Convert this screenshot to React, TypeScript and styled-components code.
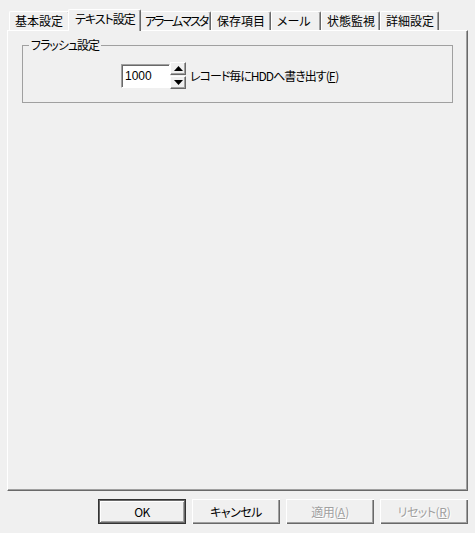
import styled, { createGlobalStyle } from 'styled-components';

const GlobalStyle = createGlobalStyle`
  html, body {
    margin: 0;
    padding: 0;
    background: #f0f0f0;
  }

  body {
    font-family: 'Noto Sans CJK JP', 'Liberation Sans', sans-serif;
    font-size: 12px;
    font-feature-settings: 'palt';
    color: #000;
  }
`;

const Window = styled.div`
  width: 475px;
  height: 533px;
  display: flex;
  flex-direction: column;
  background: #f0f0f0;
  overflow: hidden;
`;

const TabStrip = styled.div`
  display: flex;
  align-items: flex-end;
  height: 30px;
  padding-left: 9px;
`;

const Tab = styled.div<{ $width: number; $tracking: number; $active?: boolean }>`
  box-sizing: border-box;
  width: ${({ $width, $active }) => ($active ? $width + 4 : $width)}px;
  height: ${({ $active }) => ($active ? 22 : 19)}px;
  margin: ${({ $active }) => ($active ? '0 -2px -1px' : '0')};
  padding: ${({ $active }) => ($active ? '2px 0 0 6px' : '2px 0 0 5px')};
  position: relative;
  z-index: ${({ $active }) => ($active ? 2 : 1)};
  background: #f0f0f0;
  border-top: 1px solid #fff;
  border-left: 1px solid #fff;
  border-right: 1px solid #696969;
  box-shadow: inset -1px 0 0 #a0a0a0;
  border-radius: 2px 2px 0 0;
  line-height: 14px;
  letter-spacing: ${({ $tracking }) => $tracking}px;
  white-space: nowrap;
  overflow: hidden;
`;

const Panel = styled.div`
  box-sizing: border-box;
  width: 461px;
  height: 461px;
  margin-left: 7px;
  padding-top: 7px;
  border-top: 1px solid #fff;
  border-left: 1px solid #fff;
  border-right: 1px solid #696969;
  border-bottom: 1px solid #696969;
  box-shadow: inset -1px -1px 0 #a0a0a0;
`;

const GroupBox = styled.fieldset`
  box-sizing: border-box;
  height: 65px;
  margin: 0 14px;
  padding: 0;
  border: 1px solid #a0a0a0;
  border-radius: 0;
`;

const Legend = styled.legend`
  margin-left: 6px;
  padding: 0 2px;
  line-height: 14px;
  letter-spacing: -1px;
`;

const SpinRow = styled.div`
  display: flex;
  align-items: center;
  margin-top: 10px;
  padding-left: 98px;
`;

const NumberField = styled.div`
  box-sizing: border-box;
  width: 49px;
  height: 24px;
  padding: 2px 0 0 3px;
  background: #fff;
  border-top: 1px solid #a0a0a0;
  border-left: 1px solid #a0a0a0;
  border-right: 1px solid #fff;
  border-bottom: 1px solid #fff;
  box-shadow: inset 1px 1px 0 #696969;
  font-family: 'Liberation Sans', 'Noto Sans CJK JP', sans-serif;
  line-height: 18px;
`;

const Arrows = styled.div`
  display: flex;
  flex-direction: column;
  gap: 1px;
`;

const ArrowButton = styled.div`
  box-sizing: border-box;
  width: 16px;
  height: 13px;
  display: flex;
  align-items: center;
  justify-content: center;
  background: #f0f0f0;
  border-top: 1px solid #fff;
  border-left: 1px solid #fff;
  border-right: 1px solid #696969;
  border-bottom: 1px solid #696969;
  box-shadow: inset -1px -1px 0 #a0a0a0;
`;

const SpinLabel = styled.span`
  margin-left: 4px;
  line-height: 14px;
  letter-spacing: -1px;
`;

const Key = styled.span`
  text-decoration: underline;
  letter-spacing: 0;
`;

const ButtonRow = styled.div`
  display: flex;
  justify-content: flex-end;
  gap: 6px;
  margin-top: 8px;
  padding-right: 7px;
`;

const DialogButton = styled.div<{ $default?: boolean; $disabled?: boolean }>`
  box-sizing: border-box;
  width: 88px;
  height: 25px;
  display: flex;
  align-items: center;
  justify-content: center;
  background: #f0f0f0;
  color: ${({ $disabled }) => ($disabled ? '#a0a0a0' : '#000')};
  text-shadow: ${({ $disabled }) => ($disabled ? '1px 1px 0 #fff' : 'none')};
  border: ${({ $default }) => ($default ? '1px solid #333' : 'none')};
  box-shadow: ${({ $default }) =>
    $default
      ? 'inset 1px 1px 0 #696969, inset -1px -1px 0 #696969, inset 2px 2px 0 #fff, inset -2px -2px 0 #a0a0a0'
      : 'inset 1px 1px 0 #fff, inset -1px -1px 0 #696969, inset -2px -2px 0 #a0a0a0'};
  line-height: 14px;
  letter-spacing: -0.5px;
`;

const tabs = [
  { label: '基本設定', width: 61, tracking: 0 },
  { label: 'テキスト設定', width: 69, tracking: -1, active: true },
  { label: 'アラームマスタ', width: 72, tracking: -2 },
  { label: '保存項目', width: 60, tracking: 0 },
  { label: 'メール', width: 50, tracking: 0 },
  { label: '状態監視', width: 59, tracking: 0 },
  { label: '詳細設定', width: 59, tracking: 0 },
];

function Triangle({ up }: { up?: boolean }) {
  return (
    <svg width="9" height="5" viewBox="0 0 9 5">
      <polygon points={up ? '4.5,0 9,5 0,5' : '0,0 9,0 4.5,5'} fill="#000" />
    </svg>
  );
}

export default function App() {
  return (
    <Window>
      <GlobalStyle />
      <TabStrip>
        {tabs.map((t) => (
          <Tab key={t.label} $width={t.width} $tracking={t.tracking} $active={t.active}>
            {t.label}
          </Tab>
        ))}
      </TabStrip>

      <Panel>
        <GroupBox>
          <Legend>フラッシュ設定</Legend>
          <SpinRow>
            <NumberField>1000</NumberField>
            <Arrows>
              <ArrowButton>
                <Triangle up />
              </ArrowButton>
              <ArrowButton>
                <Triangle />
              </ArrowButton>
            </Arrows>
            <SpinLabel>
              レコード毎にHDDへ書き出す(<Key>F</Key>)
            </SpinLabel>
          </SpinRow>
        </GroupBox>
      </Panel>

      <ButtonRow>
        <DialogButton $default>OK</DialogButton>
        <DialogButton>キャンセル</DialogButton>
        <DialogButton $disabled>
          適用(<Key>A</Key>)
        </DialogButton>
        <DialogButton $disabled>
          リセット(<Key>R</Key>)
        </DialogButton>
      </ButtonRow>
    </Window>
  );
}
